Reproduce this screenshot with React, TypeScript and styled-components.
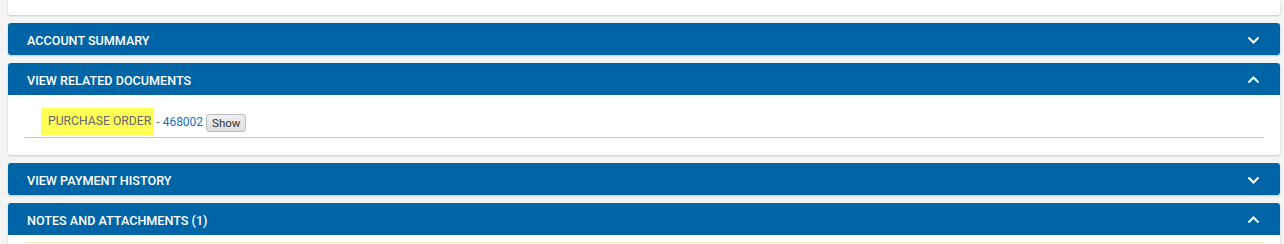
import styled, { createGlobalStyle } from "styled-components"

const GlobalStyle = createGlobalStyle`
  html, body {
    margin: 0;
    padding: 0;
    background: #f4f4f4;
    font-family: Roboto, "Liberation Sans", Arial, sans-serif;
  }
`

const Page = styled.div`
  display: flex;
  flex-direction: column;
  gap: 8px;
  padding: 0 4px 0 8px;
`

const TopCard = styled.div`
  height: 15px;
  background: #ffffff;
  border-radius: 0 0 3px 3px;
  box-shadow: 0 1px 2px rgba(0, 0, 0, 0.18);
`

const Panel = styled.section`
  background: #ffffff;
  border-radius: 3px;
  box-shadow: 0 1px 2px rgba(0, 0, 0, 0.18);
  overflow: hidden;
`

const PanelHeader = styled.div`
  display: flex;
  align-items: center;
  justify-content: space-between;
  box-sizing: border-box;
  height: 32px;
  padding: 2px 20px 0 19px;
  background: #0065a6;
  color: #ffffff;
  font-size: 12.6px;
  font-weight: 500;
  text-transform: uppercase;
`

const PanelBody = styled.div<{ $padding?: string }>`
  padding: ${(props) => props.$padding || "13px 16px 17px"};
`

const DocRow = styled.div`
  display: flex;
  align-items: center;
  padding-left: 17px;
  border-bottom: 1px solid #c4c4c4;
  padding-bottom: 2px;
  font-size: 12px;
  color: #666666;
`

const Highlight = styled.span`
  display: inline-block;
  height: 27px;
  line-height: 27px;
  padding: 0 3px 0 7px;
  background: #ffff55;
  color: #676767;
  font-size: 12.2px;
`

const Dash = styled.span`
  margin-left: 2px;
`

const DocLink = styled.a`
  color: #1a6dcc;
  text-decoration: none;
  margin-left: 3px;
`

const ShowButton = styled.button`
  margin-left: 3px;
  margin-top: 2px;
  height: 18px;
  padding: 0 5px;
  font-family: Roboto, "Liberation Sans", Arial, sans-serif;
  font-size: 11.5px;
  color: #333333;
  background: linear-gradient(#f0f0f0, #dedede);
  border: 1px solid #bdbdbd;
  border-radius: 3px;
`

const NoteBox = styled.div`
  margin-top: 7px;
  height: 10px;
  border-top: 1px solid #f3e4c0;
  background: #fffdf8;
`

const Chevron = ({ up }: { up?: boolean }) => (
  <svg width="13" height="8" viewBox="0 0 13 8">
    <polyline
      points={up ? "1.5,6.5 6.5,1.5 11.5,6.5" : "1.5,1.5 6.5,6.5 11.5,1.5"}
      fill="none"
      stroke="#ffffff"
      strokeWidth="2"
    />
  </svg>
)

export default function App() {
  return (
    <>
      <GlobalStyle />
      <Page>
        <TopCard />
        <Panel>
          <PanelHeader>
            Account Summary
            <Chevron />
          </PanelHeader>
        </Panel>
        <Panel>
          <PanelHeader>
            View Related Documents
            <Chevron up />
          </PanelHeader>
          <PanelBody>
            <DocRow>
              <Highlight>PURCHASE ORDER</Highlight>
              <Dash>-</Dash>
              <DocLink href="#">468002</DocLink>
              <ShowButton>Show</ShowButton>
            </DocRow>
          </PanelBody>
        </Panel>
        <Panel>
          <PanelHeader>
            View Payment History
            <Chevron />
          </PanelHeader>
        </Panel>
        <Panel>
          <PanelHeader>
            Notes and Attachments (1)
            <Chevron up />
          </PanelHeader>
          <PanelBody $padding="0 16px 0 17px">
            <NoteBox />
          </PanelBody>
        </Panel>
      </Page>
    </>
  )
}
